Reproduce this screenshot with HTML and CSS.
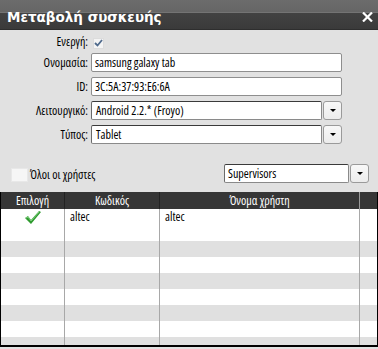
FILE: index.html
```html
<!DOCTYPE html>
<html lang="el">
<head>
<meta charset="utf-8">
<title>Μεταβολή συσκευής</title>
<link rel="stylesheet" href="styles.css">
</head>
<body>
<div class="win">
  <div class="titlebar">
    <span class="title">Μεταβολή συσκευής</span>
    <svg class="close" width="11" height="10" viewBox="0 0 11 10"><path d="M1 0.5 L10 9.5 M10 0.5 L1 9.5" stroke="#fff" stroke-width="2.2"/></svg>
  </div>
  <div class="form">
    <div class="lbl first">Ενεργή:</div>
    <div class="field"><span class="chk"><svg width="9" height="8" viewBox="0 0 9 8"><path d="M1 4 L3.5 6.5 L8 1" fill="none" stroke="#4f6a8c" stroke-width="1.8"/></svg></span></div>
    <div class="lbl">Ονομασία:</div>
    <div class="field"><div class="input">samsung galaxy tab</div></div>
    <div class="lbl">ID:</div>
    <div class="field"><div class="input">3C:5A:37:93:E6:6A</div></div>
    <div class="lbl">Λειτουργικό:</div>
    <div class="field combo"><div class="cbox">Android 2.2.* (Froyo)</div><div class="cbtn"><span class="tri"></span></div></div>
    <div class="lbl">Τύπος:</div>
    <div class="field combo"><div class="cbox">Tablet</div><div class="cbtn"><span class="tri"></span></div></div>
  </div>
  <div class="filter">
    <div class="allusers"><span class="chk2"></span><span>Όλοι οι χρήστες</span></div>
    <div class="combo small"><div class="cbox">Supervisors</div><div class="cbtn"><span class="tri"></span></div></div>
  </div>
  <div class="grid">
    <div class="row head">
      <div class="c c1">Επιλογή</div><div class="c c2">Κωδικός</div><div class="c c3">Όνομα χρήστη</div><div class="c c4"></div>
    </div>
    <div class="row w">
      <div class="c c1"><svg width="18" height="15" viewBox="0 0 18 15"><path d="M1 8 L4 6 L7 10 L15 1 L17 2 L7 14 Z" fill="#2f9a2f"/><path d="M2 8 L4 7 L7 11 L15 2" fill="none" stroke="#7fd07f" stroke-width="1"/></svg></div>
      <div class="c c2 t">altec</div><div class="c c3 t">altec</div><div class="c c4"></div>
    </div>
    <div class="row w"><div class="c c1"></div><div class="c c2"></div><div class="c c3"></div><div class="c c4"></div></div>
    <div class="row g"><div class="c c1"></div><div class="c c2"></div><div class="c c3"></div><div class="c c4"></div></div>
    <div class="row w"><div class="c c1"></div><div class="c c2"></div><div class="c c3"></div><div class="c c4"></div></div>
    <div class="row g"><div class="c c1"></div><div class="c c2"></div><div class="c c3"></div><div class="c c4"></div></div>
    <div class="row w"><div class="c c1"></div><div class="c c2"></div><div class="c c3"></div><div class="c c4"></div></div>
    <div class="row g"><div class="c c1"></div><div class="c c2"></div><div class="c c3"></div><div class="c c4"></div></div>
    <div class="row w"><div class="c c1"></div><div class="c c2"></div><div class="c c3"></div><div class="c c4"></div></div>
    <div class="row g last"><div class="c c1"></div><div class="c c2"></div><div class="c c3"></div><div class="c c4"></div></div>
  </div>
</div>
</body>
</html>
```
FILE: styles.css
```css
* { box-sizing: border-box; }
html, body { margin: 0; padding: 0; background: #e1e1e1; }
body { font-family: "Open Sans", "Liberation Sans", Arial, sans-serif; font-stretch: 78%; font-size: 12px; color: #000; }
.win { width: 378px; height: 349px; background: #e1e1e1; overflow: hidden; }
.titlebar {
  height: 30px;
  background: linear-gradient(#6c6c6c 0, #666 12px, #747474 12px, #747474 13px, #424242 13px, #3a3a3a 29px, #2e2e2e 29px, #2e2e2e 30px);
  display: flex; align-items: center; justify-content: space-between;
  padding: 3px 5px 0 7px;
}
.title { color: #fff; font-family: "DejaVu Sans", sans-serif; font-stretch: normal; font-weight: bold; font-size: 13.5px; }
.close { display: block; }
.form {
  display: grid; grid-template-columns: 88px 251px; column-gap: 3px;
  grid-template-rows: 14px 19px 19px 19px 19px; row-gap: 5px;
  padding-top: 4px;
}
.lbl { text-align: right; line-height: 19px; }
.lbl.first { line-height: 14px; padding-top: 1px; }
.field { display: flex; align-items: center; }
.chk { width: 11px; height: 11px; background: #f4f4f4; border: 1px solid #dcdcdc; display: flex; align-items: center; justify-content: center; margin-left: 2px; margin-top: 4px; }
.input { width: 251px; height: 19px; background: #fff; border: 1px solid #8e8e8e; border-radius: 2px; padding: 0 3px; line-height: 17px; }
.combo { display: flex; gap: 1px; }
.cbox { flex: 1; height: 19px; background: #fff; border: 1px solid #8a8a8a; border-top-color: #3a3a3a; border-left-color: #6a6a6a; border-radius: 2px; padding: 0 4px; line-height: 17px; }
.cbtn { width: 19px; height: 19px; background: linear-gradient(#f8f8f8, #ececec); border: 1px solid #9a9a9a; border-radius: 3px; display: flex; align-items: center; justify-content: center; }
.tri { width: 0; height: 0; border-left: 3px solid transparent; border-right: 3px solid transparent; border-top: 3px solid #000; }
.filter { display: flex; justify-content: space-between; align-items: flex-start; padding: 20px 9px 0 11px; height: 48px; }
.allusers { display: flex; align-items: center; gap: 2px; margin-top: 2px; }
.chk2 { width: 17px; height: 14px; background: #f6f6f6; border: 1px solid #e8e8e8; }
.combo.small { width: 145px; }
.combo.small .cbox { padding: 0 3px; }
.grid { border-left: 1px solid #000; border-right: 1px solid #000; border-bottom: 2px solid #000; height: 155px; overflow: hidden; }
.row { display: grid; grid-template-columns: 64px 95px 200px 17px; height: 16px; }
.row.head { height: 17px; background: #363636; color: #fff; }
.row.head .c { text-align: center; line-height: 17px; border-right: 1px solid #222; }
.row.head .c3 { border-right: 1px solid #9a9a9a; }
.row.head .c4 { border-right: none; }
.row.w { background: #fff; }
.row.g { background: #e0e0e0; }
.c { border-right: 1px solid #a8a8a8; }
.c4 { border-right: none; }
.c.t { padding-left: 5px; line-height: 16px; }
.row .c1 { display: flex; justify-content: center; align-items: center; }
.row.head .c1 { display: block; }
```
